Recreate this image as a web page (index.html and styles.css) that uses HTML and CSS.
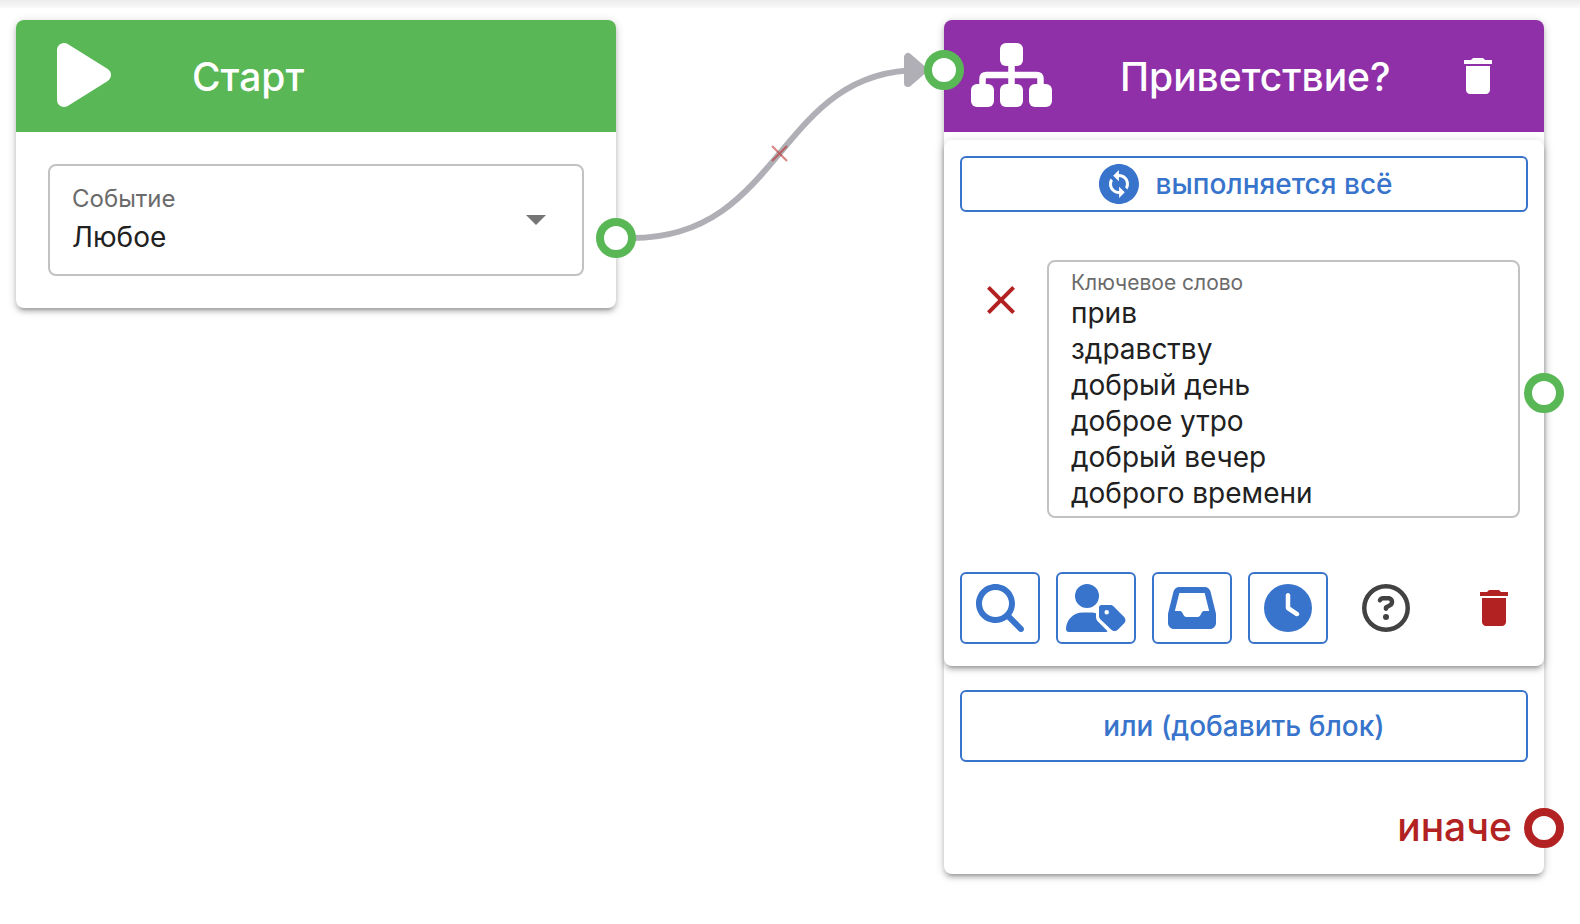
FILE: index.html
```html
<!DOCTYPE html>
<html lang="ru">

<head>
    <meta charset="UTF-8">
    <meta name="viewport" content="width=device-width, initial-scale=1.0">
    <title>Редактор сценария</title>
    <link rel="stylesheet" href="styles.css">
</head>

<body>
    <main class="canvas">
        <section class="node">
            <header class="node-header start">
                <svg class="node-icon" viewBox="0 0 84 64">
                    <path d="M22 7v50l40-25z" fill="currentColor" stroke="currentColor" stroke-width="14" stroke-linejoin="round"/>
                </svg>
                <h2>Старт</h2>
            </header>
            <div class="start-body">
                <div class="field select-field">
                    <div class="field-text">
                        <label for="event">Событие</label>
                        <select id="event">
                            <option>Любое</option>
                        </select>
                    </div>
                    <svg class="icon arrow" viewBox="0 0 24 24"><path d="M7 10l5 5 5-5z"/></svg>
                </div>
            </div>
            <span class="port start-out"></span>
        </section>

        <svg class="edge" viewBox="0 0 328 288">
            <path class="line" d="M16 218C168 218 160 50 304 50"/>
            <path class="head" d="M292 37v26l15-13z"/>
            <path class="remove" d="M156 126l15 15M171 126l-15 15"/>
        </svg>

        <section class="node">
            <header class="node-header condition">
                <svg class="node-icon" viewBox="0 0 84 64">
                    <g fill="currentColor">
                        <rect x="30" y="0" width="23" height="23" rx="6"/>
                        <rect x="1" y="41" width="23" height="23" rx="6"/>
                        <rect x="30" y="41" width="23" height="23" rx="6"/>
                        <rect x="59" y="41" width="23" height="23" rx="6"/>
                    </g>
                    <path d="M41.5 20v24M12.500 44v-8q0-4 4-4h50q4 0 4 4v8" fill="none" stroke="currentColor" stroke-width="6.5"/>
                </svg>
                <h2>Приветствие?</h2>
                <button type="button" class="icon-button" aria-label="Удалить">
                    <svg class="icon" viewBox="0 0 24 24"><path d="M6 19c0 1.1.9 2 2 2h8c1.1 0 2-.9 2-2V7H6v12zM19 4h-3.5l-1-1h-5l-1 1H5v2h14V4z"/></svg>
                </button>
                <span class="port condition-in"></span>
            </header>

            <div class="group">
                <button type="button" class="outline mode">
                    <svg class="icon" viewBox="0 0 24 24"><path d="M12 2C6.48 2 2 6.48 2 12c0 5.52 4.48 10 10 10s10-4.480 10-10C22 6.48 17.52 2 12 2zM12.060 19v-2.010c-.02 0-.04 0-.06 0-1.280 0-2.560-.49-3.540-1.460-1.710-1.710-1.920-4.350-.64-6.290l1.100 1.100c-.71 1.330-.53 3.010.59 4.130.7.7 1.620 1.030 2.540 1.010v-2.140l2.830 2.830L12.060 19zM16.170 14.760l-1.100-1.100c.71-1.330.53-3.010-.59-4.130C13.790 8.840 12.900 8.500 12 8.500c-.02 0-.04 0-.06 0v2.150L9.110 7.830 11.940 5v2.020c1.300-.02 2.610.45 3.600 1.450C17.240 10.170 17.450 12.820 16.170 14.760z"/></svg>
                    <span>выполняется всё</span>
                </button>

                <div class="keyword-row">
                    <button type="button" class="icon-button clear" aria-label="Убрать слово">
                        <svg class="icon" viewBox="0 0 24 24"><path d="M19 6.41L17.59 5 12 10.59 6.41 5 5 6.41 10.59 12 5 17.59 6.41 19 12 13.41 17.59 19 19 17.59 13.41 12z"/></svg>
                    </button>
                    <div class="field keyword-field">
                        <label for="keywords">Ключевое слово</label>
                        <textarea id="keywords" rows="6">прив
здравству
добрый день
доброе утро
добрый вечер
доброго времени</textarea>
                    </div>
                    <span class="port keyword-out"></span>
                </div>

                <div class="tools">
                    <button type="button" class="outline tool" aria-label="Поиск">
                        <svg class="icon" viewBox="0 0 512 512"><path d="M416 208c0 45.9-14.9 88.3-40 122.7L502.600 457.400c12.500 12.500 12.500 32.800 0 45.300s-32.800 12.500-45.300 0L330.700 376c-34.400 25.200-76.800 40-122.700 40C93.100 416 0 322.900 0 208S93.100 0 208 0S416 93.100 416 208zM208 352a144 144 0 1 0 0-288 144 144 0 1 0 0 288z"/></svg>
                    </button>
                    <button type="button" class="outline tool" aria-label="Метка пользователя">
                        <svg class="icon wide" viewBox="0 0 640 512">
                            <circle cx="224" cy="128" r="128"/>
                            <path d="M178 304C80 304 0 384 0 482c0 17 13 30 30 30h401c9 0 13-7 8-13l-96-96c-15-15-23-34-23-55v-37c-14-5-29-7-44-7z"/>
                            <path fill-rule="evenodd" d="M376 224h96c13 0 25 5 34 14l114 113c19 19 19 49 0 68l-68 68c-19 19-49 19-68 0L366 376c-9-9-14-21-14-34v-94c0-13 11-24 24-24zM434 278a24 24 0 1 0 0 48 24 24 0 1 0 0-48z"/>
                        </svg>
                    </button>
                    <button type="button" class="outline tool" aria-label="Входящие">
                        <svg class="icon" viewBox="0 0 512 512"><path d="M121 32C91.600 32 66 52 58.900 80.500L1.900 308.400C.6 313.500 0 318.700 0 323.900V416c0 35.300 28.700 64 64 64H448c35.300 0 64-28.700 64-64V323.900c0-5.200-.6-10.400-1.900-15.500l-57-227.900C446 52 420.400 32 391 32H121zm0 64H391l48 192H387.800c-12.100 0-23.200 6.800-28.600 17.700l-14.300 28.600c-5.400 10.800-16.500 17.700-28.600 17.700H195.800c-12.100 0-23.200-6.800-28.600-17.700l-14.300-28.600c-5.400-10.800-16.500-17.700-28.600-17.700H73L121 96z"/></svg>
                    </button>
                    <button type="button" class="outline tool" aria-label="Время">
                        <svg class="icon" viewBox="0 0 512 512"><path fill-rule="evenodd" d="M256 0a256 256 0 1 1 0 512A256 256 0 1 1 256 0zM232 120V256c0 8 4 15.500 10.700 20l96 64c11 7.400 25.900 4.400 33.300-6.700s4.400-25.900-6.700-33.300L280 243.200V120c0-13.300-10.700-24-24-24s-24 10.700-24 24z"/></svg>
                    </button>
                    <button type="button" class="icon-button help" aria-label="Справка">
                        <svg class="icon" viewBox="0 0 512 512"><path d="M464 256A208 208 0 1 0 48 256a208 208 0 1 0 416 0zM0 256a256 256 0 1 1 512 0A256 256 0 1 1 0 256zm169.800-90.700c7.900-22.300 29.100-37.300 52.800-37.300h58.300c34.900 0 63.100 28.300 63.100 63.100c0 22.600-12.100 43.500-31.700 54.800L280 264.400c-.2 13-10.900 23.600-24 23.600c-13.300 0-24-10.700-24-24V250.500c0-8.600 4.600-16.500 12.100-20.800l44.300-25.400c4.700-2.700 7.600-7.700 7.600-13.100c0-8.400-6.800-15.100-15.100-15.100H222.600c-3.400 0-6.400 2.100-7.500 5.300l-.4 1.200c-4.400 12.500-18.200 19-30.600 14.600s-19-18.200-14.600-30.600l.4-1.200zM224 352a32 32 0 1 1 64 0 32 32 0 1 1-64 0z"/></svg>
                    </button>
                    <button type="button" class="icon-button remove-group" aria-label="Удалить блок">
                        <svg class="icon" viewBox="0 0 24 24"><path d="M6 19c0 1.1.9 2 2 2h8c1.1 0 2-.9 2-2V7H6v12zM19 4h-3.5l-1-1h-5l-1 1H5v2h14V4z"/></svg>
                    </button>
                </div>
            </div>

            <div class="condition-footer">
                <button type="button" class="outline add">или (добавить блок)</button>
                <div class="else-row">
                    <span>иначе</span>
                    <span class="port else-out"></span>
                </div>
            </div>
        </section>
    </main>
</body>

</html>
```
FILE: styles.css
```css
* {
    box-sizing: border-box;
}
body {
    margin: 0;
    font-family: Inter, Roboto, sans-serif;
    font-size: 28px;
    color: #212121;
    background: #fff linear-gradient(#ececec, #fafafa) no-repeat top / 100% 8px;
}
button, select, textarea {
    font: inherit;
    color: inherit;
    border: none;
    background: none;
    padding: 0;
    margin: 0;
}
button {
    cursor: pointer;
}

/* canvas */
.canvas {
    display: grid;
    grid-template-columns: 600fr 328fr 600fr;
    align-items: start;
    padding: 20px 36px 50px 16px;
}
.node {
    position: relative;
    min-width: 0;
    border-radius: 8px;
    background: #fff;
    box-shadow: 0 2px 10px rgba(0, 0, 0, 0.2), 0 4px 4px rgba(0, 0, 0, 0.14), 0 6px 2px -4px rgba(0, 0, 0, 0.12);
}
.node-header {
    position: relative;
    display: flex;
    align-items: center;
    height: 112px;
    padding: 0 42px 0 26px;
    border-radius: 8px 8px 0 0;
    color: #fff;
}
.node-header h2 {
    flex: 1;
    margin: 0;
    padding-top: 2px;
    font-size: 39px;
    line-height: 48px;
    font-weight: 500;
}
.start {
    background: #5ab756;
}
.condition {
    background: #8f30a8;
}
.node-icon {
    width: 84px;
    height: 64px;
    margin: 0 66px 2px 0;
}
.icon {
    display: block;
    flex: none;
    width: 48px;
    height: 48px;
    fill: currentColor;
}
.icon.wide {
    width: 60px;
}
.icon-button {
    display: flex;
    align-items: center;
    justify-content: center;
}

/* connection points */
.port {
    position: absolute;
    width: 40px;
    height: 40px;
    border: 8px solid #5ab756;
    border-radius: 50%;
    background: #fff;
    z-index: 2;
}
.start-out {
    right: -20px;
    top: 198px;
}
.condition-in {
    left: -20px;
    top: 30px;
}
.keyword-out {
    right: -36px;
    top: 113px;
}
.else-out {
    right: -20px;
    top: 6px;
    border-color: #b22222;
}
.edge {
    width: 100%;
    overflow: visible;
}
.edge path {
    fill: none;
}
.edge .line {
    stroke: #b0afb6;
    stroke-width: 6px;
}
.edge .head {
    fill: #b0afb6;
    stroke: #b0afb6;
    stroke-width: 8px;
    stroke-linejoin: round;
}
.edge .remove {
    stroke: rgba(190, 30, 30, 0.55);
    stroke-width: 2px;
}

/* fields */
.field {
    border: 2px solid #c2c2c2;
    border-radius: 8px;
    padding: 0 22px;
}
.field label {
    display: block;
    color: #6b6b6b;
}
.start-body {
    padding: 32px;
}
.select-field {
    display: flex;
    align-items: center;
    padding-top: 15px;
    padding-bottom: 17px;
}
.select-field label {
    font-size: 24px;
    line-height: 36px;
}
.field-text {
    flex: 1;
}
.field-text select {
    display: block;
    width: 100%;
    height: 40px;
    line-height: 40px;
    appearance: none;
}
.arrow {
    color: #757575;
}
.keyword-field {
    flex: 1;
    padding-top: 9px;
    padding-bottom: 5px;
}
.keyword-field label {
    font-size: 21px;
    line-height: 24px;
}
.keyword-field textarea {
    display: block;
    width: 100%;
    height: 216px;
    line-height: 36px;
    resize: none;
    overflow: hidden;
}

/* condition group */
.group {
    margin-top: 8px;
    padding: 16px 16px 22px;
    border-radius: 8px;
    box-shadow: 0 2px 10px rgba(0, 0, 0, 0.2), 0 4px 4px rgba(0, 0, 0, 0.14), 0 6px 2px -4px rgba(0, 0, 0, 0.12);
}
.outline {
    display: flex;
    align-items: center;
    justify-content: center;
    border: 2px solid #3874cb;
    border-radius: 6px;
    color: #3874cb;
    font-weight: 500;
}
.mode {
    width: 100%;
    height: 56px;
    gap: 12px;
}
.keyword-row {
    position: relative;
    display: flex;
    align-items: flex-start;
    gap: 13px;
    margin-top: 48px;
    padding: 0 8px;
}
.clear {
    width: 66px;
    padding-top: 16px;
    color: #b22222;
}
.tools {
    display: flex;
    gap: 16px;
    margin-top: 54px;
}
.tool {
    width: 80px;
    height: 72px;
}
.help {
    width: 84px;
    color: #424242;
}
.remove-group {
    width: 68px;
    margin-left: auto;
    color: #b22222;
}
.condition-footer {
    padding: 24px 0 22px;
}
.add {
    width: calc(100% - 32px);
    height: 72px;
    margin: 0 16px;
}
.else-row {
    position: relative;
    margin-top: 40px;
    padding-right: 32px;
    text-align: right;
    font-size: 39px;
    line-height: 50px;
    font-weight: 500;
    color: #b22222;
}
```
